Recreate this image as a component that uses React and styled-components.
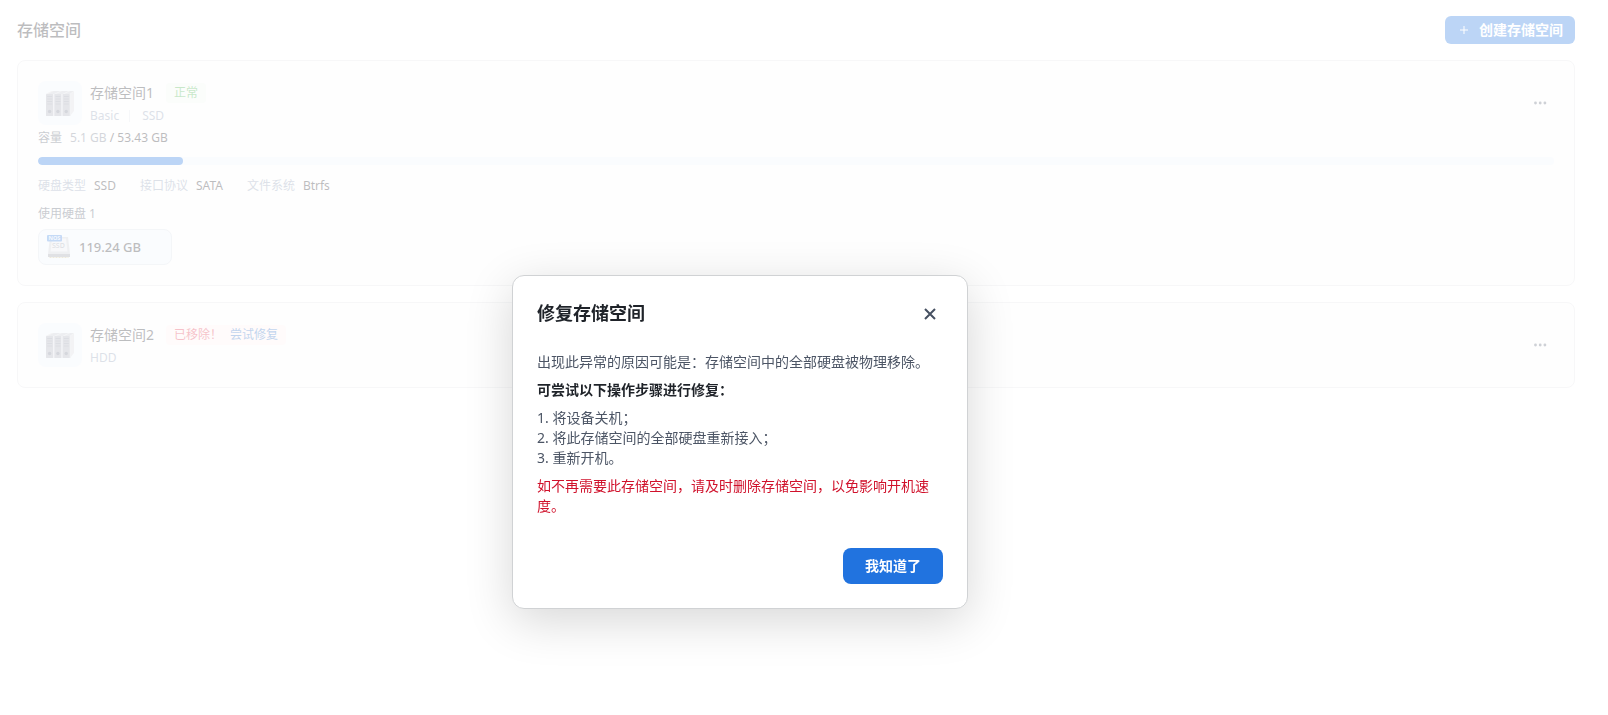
import React from 'react'
import styled, { createGlobalStyle } from 'styled-components'

const GlobalStyle = createGlobalStyle`
	* {
		box-sizing: border-box;
	}

	body {
		margin: 0;
		background: #fff;
		color: #1f2329;
		font-family: "Noto Sans", "Noto Sans CJK SC", sans-serif;
		font-size: 14px;
		line-height: 20px;
	}

	button {
		font-family: inherit;
		border: none;
		cursor: pointer;
	}

	h1, h2, h3, p, ol, dl, dd {
		margin: 0;
		padding: 0;
	}
`

const Page = styled.main`
	min-height: 100vh;
	padding: 16px 33px 16px 17px;
`

const Toolbar = styled.header`
	display: flex;
	align-items: center;
	justify-content: space-between;
	margin-bottom: 16px;
`

const PageTitle = styled.h1`
	font-size: 16px;
	font-weight: 500;
	line-height: 28px;
`

const CreateButton = styled.button`
	display: flex;
	align-items: center;
	gap: 8px;
	height: 28px;
	padding: 0 12px;
	border-radius: 6px;
	background: #2173df;
	color: #fff;
	font-size: 14px;
	font-weight: 700;
	line-height: 20px;
`

const CardList = styled.div`
	display: flex;
	flex-direction: column;
	gap: 16px;
`

const Card = styled.section`
	padding: 20px;
	border: 1px solid #e4e5e8;
	border-radius: 8px;
	background: #fafafb;
`

const CardHeader = styled.div`
	display: flex;
	align-items: center;
	gap: 8px;
`

const IconBox = styled.div`
	display: flex;
	align-items: center;
	justify-content: center;
	width: 44px;
	height: 44px;
	border-radius: 8px;
	background: #eef3fb;
`

const Heading = styled.div`
	flex: 1;
`

const NameRow = styled.div`
	display: flex;
	align-items: center;
	gap: 12px;
	height: 24px;
`

const Name = styled.h2`
	font-size: 14px;
	font-weight: 400;
	line-height: 20px;
`

const Tag = styled.span`
	display: flex;
	gap: 8px;
	padding: 0 8px;
	border-radius: 4px;
	font-size: 12px;
	line-height: 20px;
	color: ${(props) => (props.$danger ? '#e0314a' : '#48b04b')};
	background: ${(props) => (props.$danger ? '#fdf1f1' : '#f0f8f0')};
`

const RepairLink = styled.a`
	color: #2f6fc4;
	text-decoration: none;
`

const Kinds = styled.div`
	display: flex;
	align-items: center;
	height: 20px;
	padding-top: 2px;
	font-size: 12px;
	color: #8c9bb3;

	span + span {
		margin-left: 10px;
		padding-left: 12px;
		border-left: 1px solid #dfe3ea;
		line-height: 12px;
	}
`

const MoreButton = styled.button`
	display: flex;
	align-items: center;
	justify-content: center;
	width: 28px;
	height: 28px;
	padding: 0;
	background: none;
	color: #5c6475;
`

const Capacity = styled.p`
	margin-bottom: 6px;
	font-size: 12px;
	line-height: 26px;
	color: #4c5565;
`

const Used = styled.span`
	margin-left: 8px;
	color: #6e7788;
`

const Total = styled.span`
	color: #1f2329;
`

const Track = styled.div`
	height: 8px;
	border-radius: 4px;
	background: #eef3fb;
	overflow: hidden;
`

const Fill = styled.div`
	height: 100%;
	border-radius: 4px;
	background: #2173df;
`

const Specs = styled.dl`
	display: flex;
	gap: 24px;
	margin-top: 12px;
	font-size: 12px;
	line-height: 18px;
`

const Spec = styled.div`
	display: flex;
	gap: 8px;

	dt {
		color: #8c9bb3;
	}
`

const DiskTitle = styled.h3`
	margin: 10px 0 6px;
	font-size: 12px;
	font-weight: 400;
	line-height: 18px;
	color: #4c5565;
`

const Disk = styled.div`
	display: flex;
	align-items: center;
	gap: 8px;
	width: 134px;
	height: 36px;
	padding: 0 7px;
	border: 1px solid #d9dfe8;
	border-radius: 8px;
	background: #eef3fb;
	font-size: 13px;
	font-weight: 500;
`

const Mask = styled.div`
	position: fixed;
	inset: 0;
	display: flex;
	align-items: flex-start;
	justify-content: center;
	padding: 275px 128px 0 0;
	background: rgba(255, 255, 255, 0.7);
`

const Dialog = styled.div`
	width: 456px;
	padding: 24px;
	border: 1px solid #d0d2d4;
	border-radius: 12px;
	background: #fff;
	box-shadow: 0 12px 48px rgba(0, 0, 0, 0.16);
`

const DialogHeader = styled.div`
	display: flex;
	align-items: center;
	justify-content: space-between;
	margin-bottom: 24px;
`

const DialogTitle = styled.h2`
	padding-bottom: 2px;
	font-size: 18px;
	font-weight: 700;
	line-height: 26px;
`

const CloseButton = styled.button`
	display: flex;
	align-items: center;
	justify-content: center;
	width: 26px;
	height: 28px;
	padding: 0;
	background: none;
	color: #465061;
`

const DialogBody = styled.div`
	display: flex;
	flex-direction: column;
	gap: 8px;
	color: #4c5565;

	ol {
		list-style: none;
	}
`

const Strong = styled.p`
	color: #1f2329;
	font-weight: 700;
`

const Warning = styled.p`
	color: #d0112b;
`

const DialogFooter = styled.div`
	display: flex;
	justify-content: flex-end;
	margin-top: 32px;
`

const OkButton = styled.button`
	width: 100px;
	height: 36px;
	padding: 0 0 2px;
	border-radius: 8px;
	background: #2173df;
	color: #fff;
	font-size: 14px;
	font-weight: 700;
`

const StorageIcon = () => (
	<svg width="28" height="26" viewBox="0 0 28 26" aria-hidden="true">
		<path d="M0 4 6 1h22l-4 3z" fill="#c4c7cf" />
		<path d="M24 4l4-3v20l-4 5z" fill="#d6d8de" />
		{[0, 8.3, 16.6].map((x) => (
			<g key={x} transform={`translate(${x} 0)`}>
				<path d="M0 4 6 1h1.500L1.500 4z" fill="#dfe1e6" />
				<rect y="4" width="7.300" height="22" rx=".6" fill="#a9acb9" />
				<path d="M7.300 4h1v22h-1z" fill="#d9dbe1" />
				<path d="M1.200 6.500h5M1.200 9h5M1.200 11.500h5M1.200 14h5" stroke="#8b90a0" strokeWidth="1" />
				<circle cx="3.600" cy="21.500" r="1.700" fill="#747a8c" />
			</g>
		))}
	</svg>
)

const DiskIcon = () => (
	<svg width="25" height="24" viewBox="0 0 25 24" aria-hidden="true">
		<path d="M4 2h18l2 17h-22z" fill="#c9ccd4" />
		<path d="M6 3.500h14l1.500 13h-17z" fill="#e6e8ed" />
		<path d="M2 19h22v3h-22z" fill="#989ca6" />
		<path d="M3.500 22.500h19" stroke="#c9b682" strokeDasharray="2 1" />
		<text x="6" y="13" fontSize="7" fill="#9298a6">SSD</text>
		<rect x="1" y="0" width="15" height="6.500" rx="1" fill="#3f83e0" />
		<text x="2.500" y="5.200" fontSize="5.500" fontWeight="700" fill="#dfeafa">NOS</text>
	</svg>
)

const MoreIcon = () => (
	<svg width="14" height="4" viewBox="0 0 14 4" fill="currentColor" aria-hidden="true">
		<circle cx="2.500" cy="2" r="1.400" />
		<circle cx="7.200" cy="2" r="1.400" />
		<circle cx="11.900" cy="2" r="1.400" />
	</svg>
)

const PlusIcon = () => (
	<svg width="14" height="14" viewBox="0 0 14 14" stroke="currentColor" aria-hidden="true">
		<path d="M7 3v8M3 7h8" />
	</svg>
)

const CloseIcon = () => (
	<svg width="12" height="12" viewBox="0 0 12 12" stroke="currentColor" strokeWidth="2" aria-hidden="true">
		<path d="M1 1l10 10M11 1L1 11" />
	</svg>
)

const specs = [
	['硬盘类型', 'SSD'],
	['接口协议', 'SATA'],
	['文件系统', 'Btrfs'],
]

const StorageHeader = ({ name, kinds, tag }) => {
	return (
		<CardHeader>
			<IconBox><StorageIcon /></IconBox>
			<Heading>
				<NameRow>
					<Name>{name}</Name>
					{tag}
				</NameRow>
				<Kinds>
					{kinds.map((kind) => <span key={kind}>{kind}</span>)}
				</Kinds>
			</Heading>
			<MoreButton aria-label="更多"><MoreIcon /></MoreButton>
		</CardHeader>
	)
}

const RepairDialog = () => {
	return (
		<Mask>
			<Dialog role="dialog" aria-modal="true" aria-labelledby="repair-title">
				<DialogHeader>
					<DialogTitle id="repair-title">修复存储空间</DialogTitle>
					<CloseButton aria-label="关闭"><CloseIcon /></CloseButton>
				</DialogHeader>
				<DialogBody>
					<p>出现此异常的原因可能是：存储空间中的全部硬盘被物理移除。</p>
					<Strong>可尝试以下操作步骤进行修复：</Strong>
					<ol>
						<li>1. 将设备关机；</li>
						<li>2. 将此存储空间的全部硬盘重新接入；</li>
						<li>3. 重新开机。</li>
					</ol>
					<Warning>如不再需要此存储空间，请及时删除存储空间，以免影响开机速度。</Warning>
				</DialogBody>
				<DialogFooter>
					<OkButton>我知道了</OkButton>
				</DialogFooter>
			</Dialog>
		</Mask>
	)
}

const App = () => {
	const used = 5.1
	const total = 53.43

	return (
		<div lang="zh-CN">
			<GlobalStyle />
			<Page>
				<Toolbar>
					<PageTitle>存储空间</PageTitle>
					<CreateButton><PlusIcon />创建存储空间</CreateButton>
				</Toolbar>
				<CardList>
					<Card>
						<StorageHeader name="存储空间1" kinds={['Basic', 'SSD']} tag={<Tag>正常</Tag>} />
						<Capacity>
							容量<Used>{used} GB</Used> <Total>/ {total} GB</Total>
						</Capacity>
						<Track>
							<Fill style={{ width: `${(used / total) * 100}%` }} />
						</Track>
						<Specs>
							{specs.map(([label, value]) => (
								<Spec key={label}>
									<dt>{label}</dt>
									<dd>{value}</dd>
								</Spec>
							))}
						</Specs>
						<DiskTitle>使用硬盘 1</DiskTitle>
						<Disk><DiskIcon />119.24 GB</Disk>
					</Card>
					<Card>
						<StorageHeader
							name="存储空间2"
							kinds={['HDD']}
							tag={<Tag $danger>已移除！<RepairLink href="#repair">尝试修复</RepairLink></Tag>}
						/>
					</Card>
				</CardList>
			</Page>
			<RepairDialog />
		</div>
	)
}

export default App
